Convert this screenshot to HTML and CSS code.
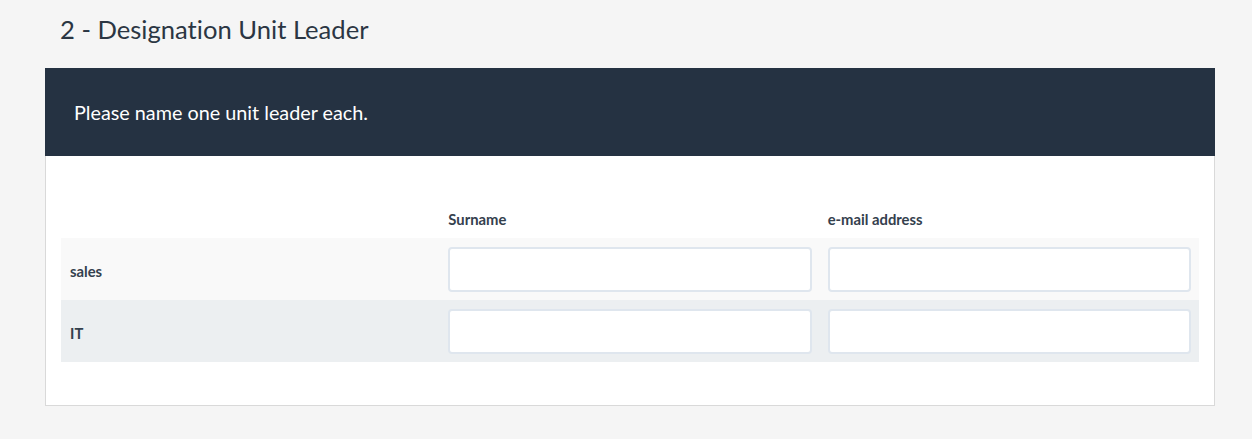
FILE: index.html
```html
<!DOCTYPE html>
<html lang="en">
<head>
<meta charset="utf-8">
<title>Designation Unit Leader</title>
<link rel="stylesheet" href="styles.css">
</head>
<body>
<main class="page">
  <h2 class="section-title">2 - Designation Unit Leader</h2>
  <section class="card">
    <header class="card-head">Please name one unit leader each.</header>
    <div class="card-body">
      <div class="matrix">
        <div class="matrix-row matrix-head">
          <div class="cell"></div>
          <div class="cell col-label">Surname</div>
          <div class="cell col-label">e-mail address</div>
        </div>
        <div class="matrix-row row-odd">
          <div class="cell row-label">sales</div>
          <div class="cell"><input class="field" type="text"></div>
          <div class="cell"><input class="field" type="text"></div>
        </div>
        <div class="matrix-row row-even">
          <div class="cell row-label">IT</div>
          <div class="cell"><input class="field" type="text"></div>
          <div class="cell"><input class="field" type="text"></div>
        </div>
      </div>
    </div>
  </section>
</main>
</body>
</html>
```
FILE: styles.css
```css
* { box-sizing: border-box; }

html, body {
  margin: 0;
  padding: 0;
  background: #f5f5f5;
  font-family: Lato, "Open Sans", sans-serif;
  font-variant-ligatures: none;
  color: #34404d;
}

.page {
  padding: 12px 37px 0 45px;
}

.section-title {
  margin: 0 0 22px 15px;
  font-size: 25.6px;
  font-weight: 400;
  line-height: 34px;
  color: #2b3643;
}

.card {
  background: #fff;
  border: 1px solid #d9d9d9;
}

.card-head {
  background: #253242;
  color: #fff;
  font-size: 19.8px;
  line-height: 24px;
  padding: 32px 29px 32px;
  margin: -1px -1px 0;
}

.card-body {
  padding: 52px 15px 43px;
}

.matrix-row {
  display: grid;
  grid-template-columns: 1fr 1fr 1fr;
  align-items: center;
}

.cell {
  padding: 0 8px;
}

.matrix-head {
  height: 30px;
  align-items: end;
  padding-bottom: 10px;
}

.col-label {
  font-size: 14.8px;
  font-weight: 700;
  line-height: 18px;
  color: #34404d;
}

.row-odd { background: #f9f9f9; height: 62px; }
.row-even { background: #eceff1; height: 62px; }

.row-label {
  padding: 4px 8px 0 9px;
  font-size: 14.8px;
  font-weight: 700;
  color: #34404d;
}

.field {
  display: block;
  width: 100%;
  height: 45px;
  margin-top: 1px;
  border: 2px solid #dfe6ee;
  border-radius: 4px;
  background: #fff;
  font: inherit;
  outline: none;
}
```
